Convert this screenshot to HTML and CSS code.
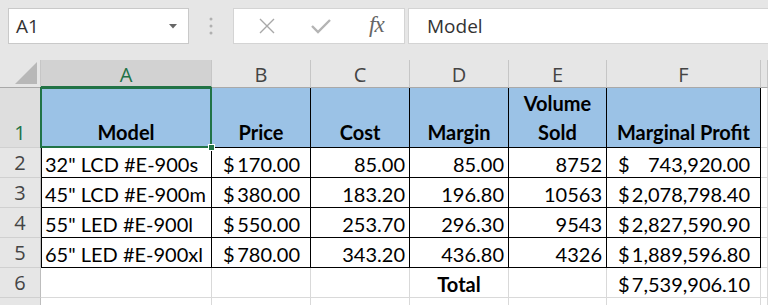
FILE: index.html
```html
<!DOCTYPE html>
<html>
<head>
<meta charset="utf-8">
<link rel="stylesheet" href="styles.css">
</head>
<body>
<div class="app">
  <div class="toolbar">
    <div class="namebox">
      <span>A1</span>
      <svg class="caret" width="8" height="5" viewBox="0 0 8 5"><path d="M0 0 L8 0 L4 4.5 Z" fill="#666"/></svg>
    </div>
    <div class="grip">
      <svg width="4" height="18" viewBox="0 0 4 18"><circle cx="2" cy="2" r="1.5" fill="#b0b0b0"/><circle cx="2" cy="9" r="1.5" fill="#b0b0b0"/><circle cx="2" cy="16" r="1.5" fill="#b0b0b0"/></svg>
    </div>
    <div class="fxbtns">
      <svg class="ico" width="16" height="16" viewBox="0 0 16 16"><path d="M1 1 L15 15 M15 1 L1 15" stroke="#a8a8a8" stroke-width="1.4" fill="none"/></svg>
      <svg class="ico" width="20" height="16" viewBox="0 0 20 16"><path d="M1 8 L7 14 L19 2" stroke="#b4b4b4" stroke-width="2.4" fill="none"/></svg>
      <span class="fx">fx</span>
    </div>
    <div class="formula">Model</div>
  </div>

  <div class="sheet">
    <!-- column headers -->
    <div class="c ch corner"><svg width="22" height="22" viewBox="0 0 22 22"><path d="M22 0 L22 22 L0 22 Z" fill="#b8b8b8"/></svg></div>
    <div class="c ch sel-col">A</div>
    <div class="c ch">B</div>
    <div class="c ch">C</div>
    <div class="c ch">D</div>
    <div class="c ch">E</div>
    <div class="c ch">F</div>
    <div class="c ch"></div>

    <!-- row 1 -->
    <div class="c rh sel-row">1</div>
    <div class="c t hd a1">Model<span class="handle"></span></div>
    <div class="c t hd">Price</div>
    <div class="c t hd">Cost</div>
    <div class="c t hd">Margin</div>
    <div class="c t hd">Volume<br>Sold</div>
    <div class="c t hd">Marginal Profit</div>
    <div class="c"></div>

    <!-- row 2 -->
    <div class="c rh">2</div>
    <div class="c t txt first">32" LCD #E-900s</div>
    <div class="c t acc"><span>$</span><span>170.00</span></div>
    <div class="c t num">85.00</div>
    <div class="c t num">85.00</div>
    <div class="c t num">8752</div>
    <div class="c t acc"><span>$</span><span>743,920.00</span></div>
    <div class="c"></div>

    <!-- row 3 -->
    <div class="c rh">3</div>
    <div class="c t txt first">45" LCD #E-900m</div>
    <div class="c t acc"><span>$</span><span>380.00</span></div>
    <div class="c t num">183.20</div>
    <div class="c t num">196.80</div>
    <div class="c t num">10563</div>
    <div class="c t acc"><span>$</span><span>2,078,798.40</span></div>
    <div class="c"></div>

    <!-- row 4 -->
    <div class="c rh">4</div>
    <div class="c t txt first">55" LED #E-900l</div>
    <div class="c t acc"><span>$</span><span>550.00</span></div>
    <div class="c t num">253.70</div>
    <div class="c t num">296.30</div>
    <div class="c t num">9543</div>
    <div class="c t acc"><span>$</span><span>2,827,590.90</span></div>
    <div class="c"></div>

    <!-- row 5 -->
    <div class="c rh">5</div>
    <div class="c t txt first">65" LED #E-900xl</div>
    <div class="c t acc"><span>$</span><span>780.00</span></div>
    <div class="c t num">343.20</div>
    <div class="c t num">436.80</div>
    <div class="c t num">4326</div>
    <div class="c t acc"><span>$</span><span>1,889,596.80</span></div>
    <div class="c"></div>

    <!-- row 6 -->
    <div class="c rh">6</div>
    <div class="c"></div>
    <div class="c"></div>
    <div class="c"></div>
    <div class="c ctr bold">Total</div>
    <div class="c"></div>
    <div class="c acc"><span>$</span><span>7,539,906.10</span></div>
    <div class="c"></div>

    <!-- row 7 (only its top edge is visible) -->
    <div class="c rh stub"></div>
    <div class="c stub"></div>
    <div class="c stub"></div>
    <div class="c stub"></div>
    <div class="c stub"></div>
    <div class="c stub"></div>
    <div class="c stub"></div>
    <div class="c stub"></div>
  </div>
</div>
</body>
</html>
```

FILE: styles.css
```css
* { box-sizing: border-box; }
html, body { margin: 0; padding: 0; }
body {
  width: 768px;
  height: 305px;
  overflow: hidden;
  background: #ffffff;
  font-family: "Lato", "Liberation Sans", sans-serif;
}
.app { width: 768px; height: 305px; overflow: hidden; }

.toolbar {
  height: 60px;
  background: #e6e6e6;
  display: flex;
  align-items: flex-start;
  padding-top: 8px;
  padding-left: 8px;
}
.namebox {
  width: 181px;
  height: 36px;
  background: #fff;
  border: 1px solid #c9c9c9;
  display: flex;
  align-items: center;
  justify-content: space-between;
  padding: 0 11px 0 7px;
  font-family: "Open Sans", "Noto Sans", sans-serif;
  font-size: 19px;
  color: #333;
}
.caret { margin-top: 1px; }
.grip {
  width: 44px;
  height: 36px;
  display: flex;
  align-items: center;
  justify-content: center;
}
.fxbtns {
  width: 172px;
  height: 36px;
  background: #fff;
  border: 1px solid #d4d4d4;
  display: flex;
  align-items: center;
  padding-left: 25px;
}
.fxbtns .ico:nth-child(1) { margin-right: 36px; }
.fxbtns .ico:nth-child(2) { margin-right: 38px; }
.fx {
  font-family: "Liberation Serif", "DejaVu Serif", serif;
  font-style: italic;
  font-size: 23px;
  color: #666;
  letter-spacing: -1px;
  margin-top: -3px;
}
.formula {
  flex: 1;
  height: 36px;
  margin-left: 3px;
  background: #fff;
  border: 1px solid #d4d4d4;
  border-right: none;
  display: flex;
  align-items: center;
  padding-left: 18px;
  font-family: "Open Sans", "Noto Sans", sans-serif;
  font-size: 19px;
  color: #333;
}

.sheet {
  display: grid;
  grid-template-columns: 41px 171px 99px 99px 99px 98px 154px 1fr;
  grid-template-rows: 28px 60px repeat(6, 30px) 7px;
}
.c {
  border-right: 1px solid #d9d9d9;
  border-bottom: 1px solid #d9d9d9;
  font-size: 20px;
  line-height: 29px;
  padding-top: 2px;
  color: #000;
  white-space: nowrap;
  overflow: visible;
}
.stub { border-bottom: none; padding: 0; }
.ch {
  background: #e6e6e6;
  border-right: 1px solid #c6c6c6;
  border-bottom: 1px solid #a9a9a9;
  font-family: "Open Sans", "Noto Sans", sans-serif;
  font-size: 20px;
  color: #444;
  line-height: 27px;
  padding-top: 1px;
  text-align: center;
}
.corner {
  display: flex;
  align-items: flex-end;
  justify-content: flex-end;
  padding: 0 3px 3px 0;
  border-right: 1px solid #c6c6c6;
}
.sel-col {
  background: #d2d2d2;
  color: #217346;
  border-bottom: 2px solid #217346;
}
.rh {
  background: #e6e6e6;
  border-right: 1px solid #bdbdbd;
  border-bottom: 1px solid #d0d0d0;
  font-family: "Open Sans", "Noto Sans", sans-serif;
  font-size: 20px;
  color: #444;
  text-align: center;
  display: flex;
  align-items: flex-end;
  justify-content: center;
  line-height: 29px;
  padding-top: 0;
}
.sel-row {
  background: #dedede;
  color: #217346;
}

.t {
  border-right-color: #000;
  border-bottom-color: #000;
}
.first { box-shadow: inset 1px 0 0 #000; }
.hd {
  background: #9bc2e6;
  font-weight: 700;
  text-align: center;
  display: flex;
  flex-direction: column;
  justify-content: flex-end;
  align-items: center;
  line-height: 29px;
  padding-top: 0;
  padding-bottom: 0;
}
.a1 { position: relative; }
.a1::after {
  content: "";
  position: absolute;
  left: -1px;
  top: -1px;
  right: -1px;
  bottom: -1px;
  border: 2px solid #217346;
  pointer-events: none;
}
.handle {
  position: absolute;
  right: -4px;
  bottom: -4px;
  width: 7px;
  height: 7px;
  background: #217346;
  border: 1px solid #fff;
  z-index: 2;
}
.txt { padding-left: 4px; }
.num { text-align: right; padding-right: 4px; }
.acc {
  display: flex;
  justify-content: space-between;
  padding: 2px 10px 0 11px;
}
.ctr { text-align: center; }
.bold { font-weight: 700; }
```
